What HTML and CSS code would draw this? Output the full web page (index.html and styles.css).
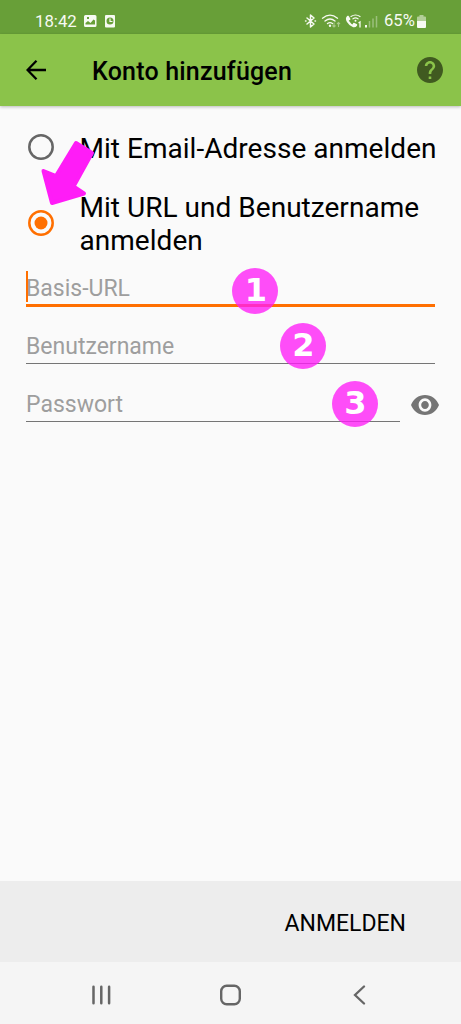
FILE: index.html
```html
<!DOCTYPE html>
<html lang="de">
<head>
<meta charset="utf-8">
<title>Konto hinzufügen</title>
<link rel="stylesheet" href="styles.css">
</head>
<body>
<div class="screen">
  <div class="status">
    <span class="clock">18:42</span>
    <svg class="status-left" width="32" height="14" viewBox="0 0 32 14">
      <path fill="#f7faf2" fill-rule="evenodd" d="M1.500 1h9.500Q12.500 1 12.500 2.500v9Q12.500 13 11 13H1.500Q0 13 0 11.500v-9Q0 1 1.500 1ZM1.500 10.500h9.500V6.500L9.500 5.500 6.500 9 4 7 1.500 9ZM3 3v2h2V3Z"/>
      <path fill="#f7faf2" fill-rule="evenodd" d="M22 1h8q1 0 1 1v10.500q0 1-1 1h-8q-1 0-1-1V2q0-1 1-1ZM26 3.500a3.500 3.500 0 1 0 0 7 3.500 3.500 0 0 0 0-7Z"/>
      <path fill="none" stroke="#f7faf2" stroke-width="1.200" d="M26 4.500v3h2.500"/>
    </svg>
    <svg class="status-right" width="76" height="16" viewBox="0 0 76 16">
      <g fill="none" stroke="#f7faf2" stroke-width="1.500" stroke-linecap="round" stroke-linejoin="round">
        <path d="M3 5l7 6-3.500 3V2L10 5l-7 6M1.500 8h.5M11 8h.5"/>
        <path stroke-width="1.300" d="M18.500 5.200q7.500-6 15 0M21 8q5-4 10 0M23.500 10.600q2.500-2 5 0"/>
        <path stroke-width="1.200" d="M47 3.500q4.500-3 9 0M49 5.800q2.500-1.800 5 0"/>
      </g>
      <circle cx="26" cy="12.700" r="1.200" fill="#f7faf2"/>
      <circle cx="51.500" cy="7.800" r="1" fill="#f7faf2"/>
      <path fill="none" stroke="#a9c98a" stroke-width="1.100" d="M30 9.500V14M28.500 12.500 30 14l1.500-1.500M34.500 14V9.500M33 11l1.500-1.500L36 11"/>
      <path fill="none" stroke="#f7faf2" stroke-width="2.400" stroke-linecap="round" d="M44 4Q42.300 5.500 44 8.500 46 12 49.500 13q1.500.3 2.500-1M44 4l1.200 2M52 12l-2-1"/>
      <path fill="none" stroke="#f7faf2" stroke-width="1.300" d="M54.500 10l1.500-1v5.500"/>
      <rect x="61" y="12" width="2" height="2.500" fill="#f7faf2"/>
      <path fill="none" stroke="#9bc07c" stroke-width="1.500" d="M65.500 14.500V8M69 14.500V5.500M72.500 14.500V3"/>
    </svg>
    <span class="percent">65%</span>
    <svg class="battery" width="9" height="14" viewBox="0 0 9 14">
      <path fill="#b3cf99" d="M2.500 0h4v1.500H8q1 0 1 1V6H0V2.500q0-1 1-1h1.500z"/>
      <path fill="#f7faf2" d="M0 6h9v6q0 1-1 1H1q-1 0-1-1z"/>
    </svg>
  </div>

  <header class="bar">
    <svg class="back" width="20" height="20" viewBox="0 0 20 20"><path d="M20 10H1.500M10.500.8 1.500 10l9 9.200" fill="none" stroke="#000" stroke-width="2.300"/></svg>
    <h1 class="title">Konto hinzufügen</h1>
    <svg class="help" width="26" height="26" viewBox="2 2 20 20"><path fill="#405a20" d="M12 2C6.480 2 2 6.480 2 12s4.480 10 10 10 10-4.480 10-10S17.520 2 12 2zm1 17h-2v-2h2v2zm2.070-7.750l-.9.920C13.450 12.900 13 13.500 13 15h-2v-.5c0-1.100.45-2.100 1.170-2.830l1.240-1.260c.37-.36.59-.86.59-1.410 0-1.100-.9-2-2-2s-2 .9-2 2H8c0-2.210 1.790-4 4-4s4 1.790 4 4c0 .88-.36 1.680-.93 2.250z"/></svg>
  </header>

  <main class="content">
    <div class="option first">
      <svg class="radio" width="26" height="26" viewBox="0 0 26 26"><circle cx="13" cy="13" r="11.700" fill="none" stroke="#666" stroke-width="2.500"/></svg>
      <span class="label">Mit Email-Adresse anmelden</span>
    </div>
    <div class="option second">
      <svg class="radio" width="26" height="26" viewBox="0 0 26 26"><circle cx="13" cy="13" r="11.700" fill="none" stroke="#ff6f00" stroke-width="2.500"/><circle cx="13" cy="13" r="6.500" fill="#ff6f00"/></svg>
      <span class="label">Mit URL und Benutzername<br>anmelden</span>
    </div>
    <div class="field active"><span class="hint">Basis-URL</span><span class="caret"></span><span class="badge one">1</span></div>
    <div class="field user"><span class="hint">Benutzername</span><span class="badge two">2</span></div>
    <div class="password">
      <div class="field"><span class="hint">Passwort</span><span class="badge three">3</span></div>
      <svg class="eye" width="28" height="20" viewBox="1 4.500 22 15" preserveAspectRatio="none"><path fill="#757575" d="M12 4.500C7 4.500 2.730 7.610 1 12c1.730 4.390 6 7.500 11 7.500s9.270-3.110 11-7.500c-1.730-4.390-6-7.500-11-7.500zM12 17c-2.760 0-5-2.240-5-5s2.240-5 5-5 5 2.240 5 5-2.240 5-5 5zm0-8c-1.660 0-3 1.340-3 3s1.340 3 3 3 3-1.340 3-3-1.340-3-3-3z"/></svg>
    </div>
    <svg class="pointer" width="60" height="70" viewBox="38 138 60 70"><path d="M52 203 43.500 171 56 176 76 143 92 153 73.500 186.500 84 193.500Z" fill="#ff1cf7" stroke="#ff1cf7" stroke-width="4" stroke-linejoin="round"/></svg>
  </main>

  <footer class="actions"><span class="submit">ANMELDEN</span></footer>

  <nav class="nav">
    <svg width="20" height="20" viewBox="0 0 20 20"><path d="M2.500 1.800v16.400M10.300 1.800v16.400M18.100 1.800v16.400" stroke="#666" stroke-width="2.500" stroke-linecap="round"/></svg>
    <svg width="22" height="22" viewBox="0 0 22 22"><rect x="1.200" y="1.700" width="18.600" height="18.600" rx="5.500" fill="none" stroke="#666" stroke-width="2.400"/></svg>
    <svg width="20" height="20" viewBox="0 0 20 20"><path d="M14 1.500 5 10l9 8.500" fill="none" stroke="#666" stroke-width="2.300" stroke-linecap="round"/></svg>
  </nav>
</div>
</body>
</html>
```
FILE: styles.css
```css
body {
  margin: 0;
  font-family: Roboto, "Liberation Sans", sans-serif;
  color: #000;
}
svg { display: block; flex: none; }
.screen {
  display: flex;
  flex-direction: column;
  width: 461px;
  height: 1024px;
  overflow: hidden;
  background: #fafafa;
}
.status {
  display: flex;
  align-items: center;
  box-sizing: border-box;
  height: 34px;
  padding: 8px 0 0 35px;
  background: #689f38;
  color: #f7faf2;
  font-size: 17px;
  line-height: 26px;
}
.clock { width: 49px; font-size: 16.8px; }
.status-right { margin-left: 188px; }
.percent { width: 33px; margin-left: 4px; font-size: 16.6px; white-space: nowrap; }
.battery { margin-top: 1px; }
.bar {
  display: flex;
  align-items: center;
  box-sizing: border-box;
  height: 72px;
  padding: 0 18px 0 26px;
  background: #8bc34a;
  box-shadow: 0 1px 3px rgba(0, 0, 0, .25);
}
.title {
  flex: 1;
  margin: 3px 0 0 46px;
  font-size: 25px;
  font-weight: 500;
  line-height: 32px;
  letter-spacing: .2px;
}
.content {
  position: relative;
  flex: 1;
  padding: 26px 26px 0;
}
.option {
  display: flex;
  align-items: center;
  margin-left: 2px;
}
.first { height: 33px; margin-bottom: 27px; }
.second { height: 66px; }
.radio { margin: -4px 25.500px 0 0; }
.label {
  font-size: 28px;
  line-height: 33px;
  letter-spacing: .03px;
  white-space: nowrap;
}
.second .label { margin-top: -2px; }
.field {
  position: relative;
  box-sizing: border-box;
  height: 58px;
  padding-top: 27px;
  border-bottom: 1px solid #757575;
}
.active {
  height: 49px;
  padding-top: 17px;
  border-bottom: 3px solid #ff6f00;
}
.user {
  height: 57px;
  padding-top: 26px;
}
.hint {
  display: block;
  color: #9e9e9e;
  font-size: 23px;
  line-height: 28px;
}
.caret {
  position: absolute;
  top: 13px;
  left: 0;
  width: 2px;
  height: 31px;
  background: #ff6f00;
}
.badge {
  position: absolute;
  z-index: 1;
  box-sizing: border-box;
  width: 46px;
  height: 46px;
  padding-left: 1px;
  border-radius: 50%;
  background: rgba(255, 28, 247, .78);
  color: #fff;
  font: bold 32px/45px "DejaVu Sans", sans-serif;
  text-align: center;
}
.one { left: 206px; top: 10px; padding-left: 2px; }
.two { left: 254px; top: 16px; }
.three { left: 306px; top: 17px; }
.password { display: flex; align-items: center; margin-right: -5px; }
.password .field { width: 374px; }
.eye { margin: 24px 0 0 11px; }
.pointer { position: absolute; left: 38px; top: 32px; }
.actions {
  display: flex;
  align-items: center;
  justify-content: flex-end;
  box-sizing: border-box;
  height: 81px;
  padding: 3px 55px 0 0;
  background: #ededed;
  font-size: 23px;
}
.nav {
  display: flex;
  align-items: center;
  justify-content: space-between;
  box-sizing: border-box;
  height: 62px;
  padding: 3px 91px 0;
  background: #f5f5f5;
}
```
